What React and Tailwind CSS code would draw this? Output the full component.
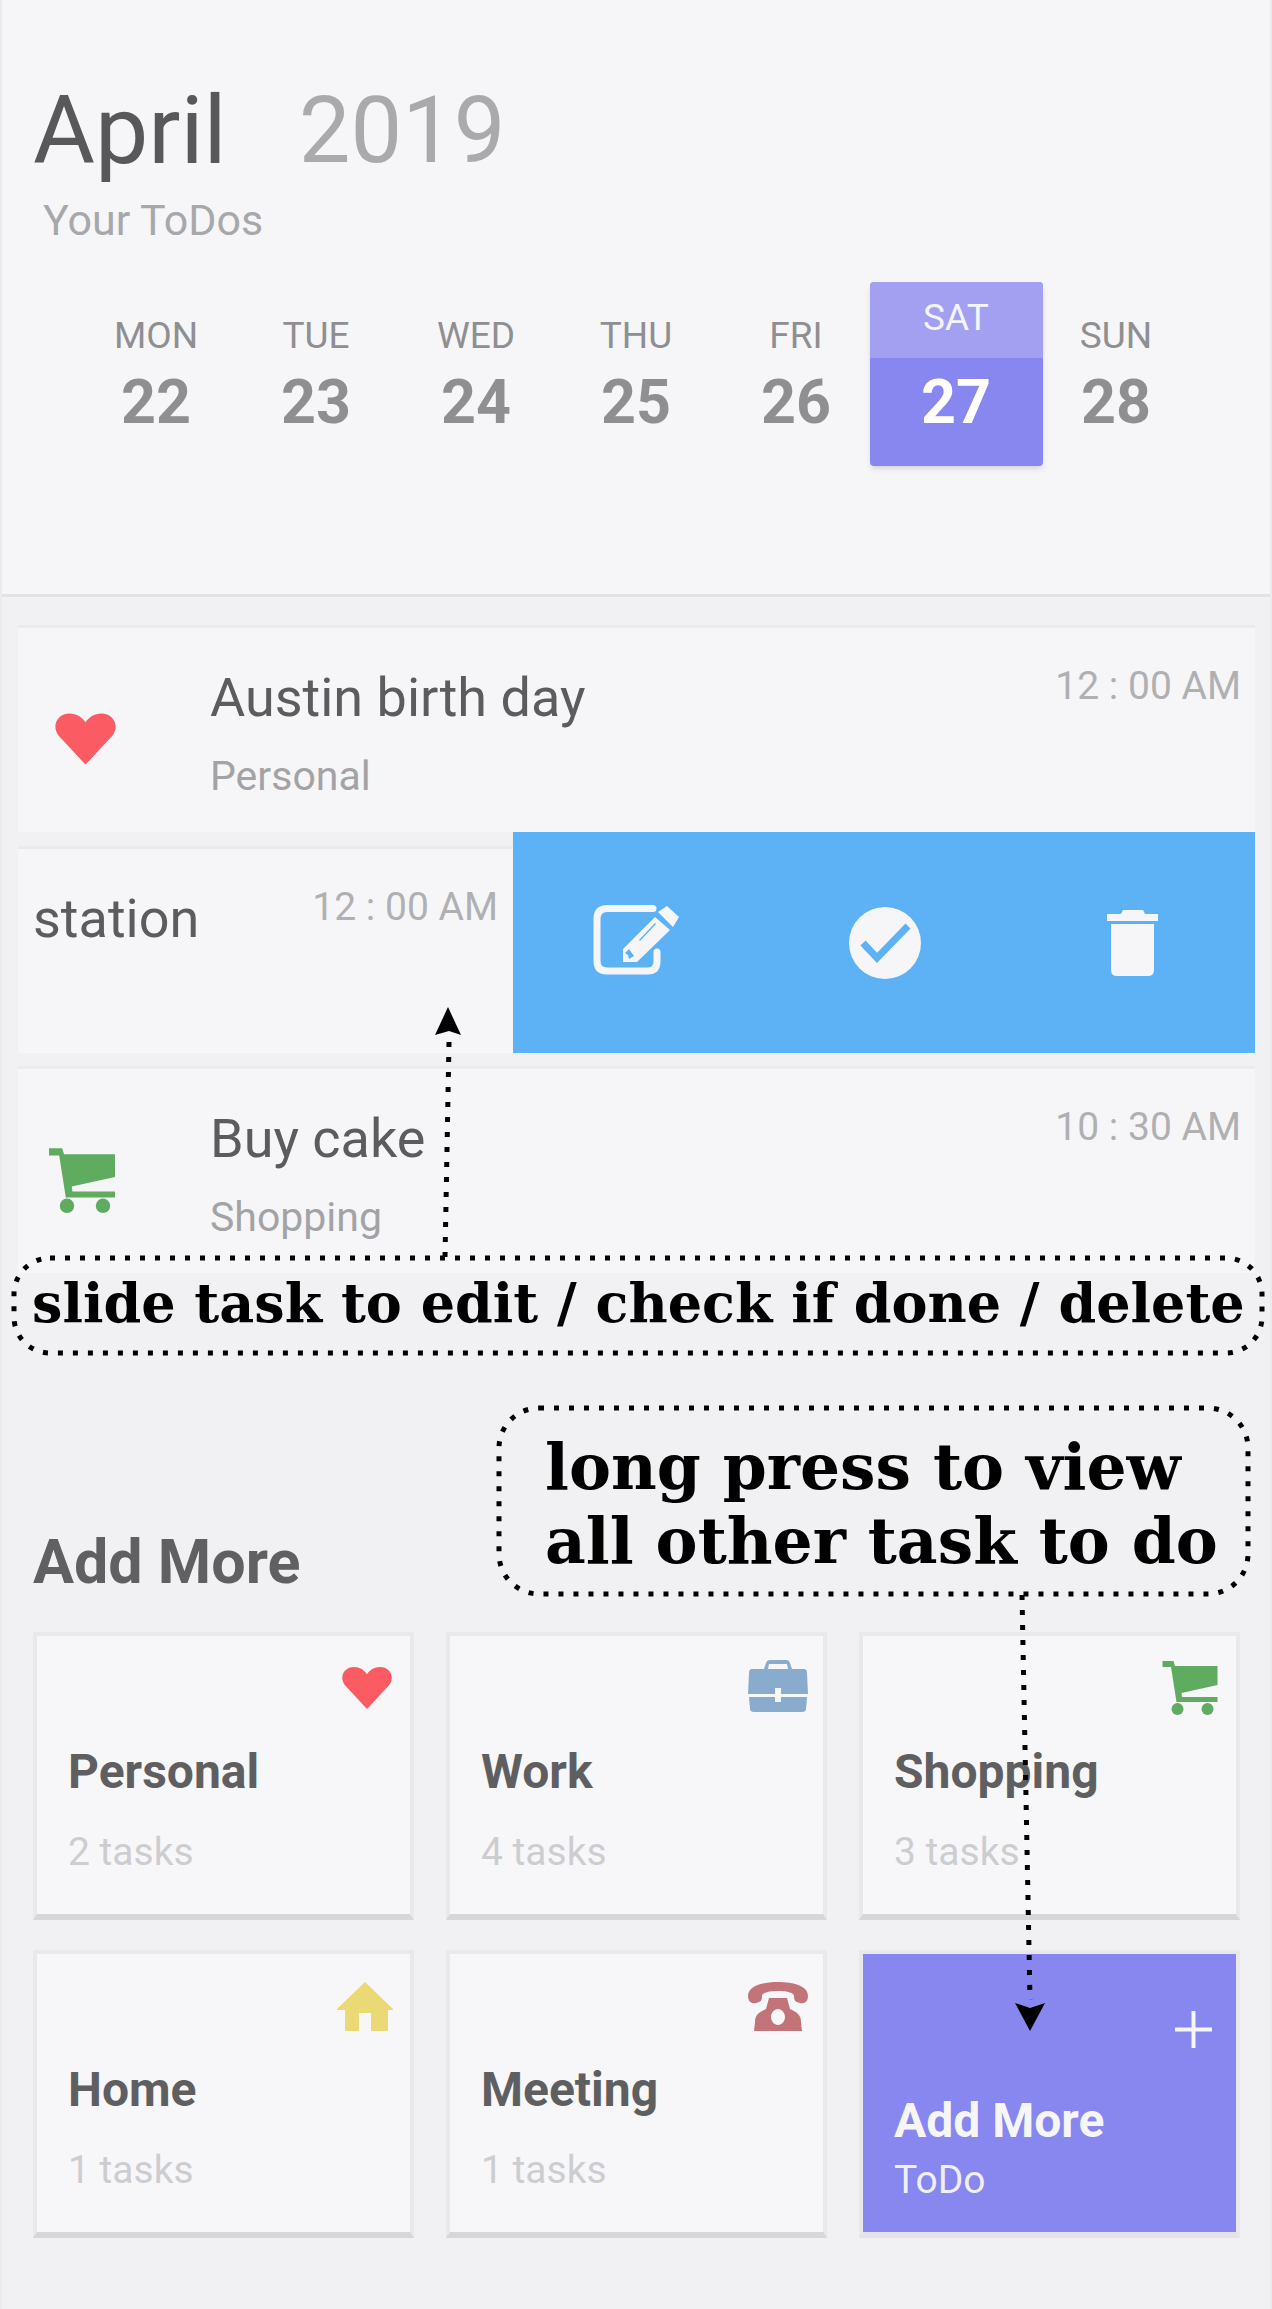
const days = [
  ["MON", 22],
  ["TUE", 23],
  ["WED", 24],
  ["THU", 25],
  ["FRI", 26],
  ["SAT", 27],
  ["SUN", 28],
];

function Heart({ className }) {
  return (
    <svg viewBox="0 0 64 52" className={className} fill="#fb5b62">
      <path d="M32 52L5 23C-3 13 3 0 16 0C23 0 29 4 32 9C35 4 41 0 48 0C61 0 67 13 59 23Z" />
    </svg>
  );
}

function Cart({ className }) {
  return (
    <svg viewBox="0 0 55 55" className={className} fill="#5fac60">
      <path d="M0 1H11L12.5 6H55V25L19 33L19.5 37H55V42H14L8.5 7H0Z" />
      <circle cx="15" cy="49" r="6" />
      <circle cx="45" cy="49" r="6" />
    </svg>
  );
}

function Briefcase({ className }) {
  return (
    <svg viewBox="0 0 60 52" className={className} fill="#88abce" fillRule="evenodd">
      <path d="M4 9H16L18 3Q19 0 22 0H38Q41 0 42 3L44 9H56Q59 9 59 13L60 34H33V28H27V34H0L1 13Q1 9 4 9ZM21 4L20 9H40L39 4Z" />
      <path d="M1 37H27V42H33V37H59L58 49Q58 52 54 52H6Q2 52 2 49Z" />
    </svg>
  );
}

function House({ className }) {
  return (
    <svg viewBox="0 0 56 49" className={className} fill="#ebd976">
      <path d="M28 0L56 27V28H51V49H34V31H22V49H8V28H0V27Z" />
    </svg>
  );
}

function Phone({ className }) {
  return (
    <svg viewBox="0 0 60 49" className={className} fill="#c27479" fillRule="evenodd">
      <path d="M0 14C0 4 14 0 30 0C46 0 60 4 60 14C60 20 56 22 52 21C47 20 46 18 46 14C46 11 40 9 30 9C20 9 14 11 14 14C14 18 13 20 8 21C4 22 0 20 0 14Z" />
      <path d="M21 16H39L42 27C48 30 53 32 53 40L54 49H6L7 40C7 32 12 30 18 27ZM30 27C26 27 23 31 23 35C23 39 26 43 30 43C34 43 37 39 37 35C37 31 34 27 30 27Z" />
    </svg>
  );
}

function EditIcon() {
  return (
    <svg viewBox="0 0 87 70" className="w-[87px] h-[70px] -mt-[6px]">
      <path d="M60 3.5H14Q4 3.5 4 14V56Q4 66 14 66H55Q64 66 64 56V47" fill="none" stroke="#f6f6f9" strokeWidth="7" strokeLinecap="round" />
      <path d="M62 12L77 25L44 57H30V44ZM62 18L46 35L47 36L63 19ZM36 44L32 48L35 50L36 54L41 51Z" fill="#f6f6f9" fillRule="evenodd" />
      <path d="M65 7L74 1L86 12L80 22Z" fill="#f6f6f9" />
    </svg>
  );
}

function CheckIcon() {
  return (
    <svg viewBox="0 0 72 72" className="w-[72px] h-[72px] ml-[2px]">
      <circle cx="36" cy="36" r="36" fill="#f6f6f9" />
      <path d="M14 36L28 51L59 19" fill="none" stroke="#5cb2f5" strokeWidth="7" />
    </svg>
  );
}

function TrashIcon() {
  return (
    <svg viewBox="0 0 51 66" className="w-[51px] h-[66px] ml-[2px]" fill="#f6f6f9">
      <path d="M14 4L16 0H36L38 4H51V11H0V4Z" />
      <path d="M4 14H47V60Q47 66 41 66H10Q4 66 4 60Z" />
    </svg>
  );
}

function TaskRow({ icon, title, category, time }) {
  return (
    <div className="h-[207px] bg-[#f6f6f9] border-t-[3px] border-[#ebebee] flex items-start">
      <div className="w-[192px] self-stretch shrink-0 flex items-center justify-center pt-[17px] pr-[58px]">{icon}</div>
      <div className="flex-1 pt-[45px]">
        <div className="text-[54px] leading-[50px] text-[#5c5c5f]">{title}</div>
        <div className="text-[41px] leading-[40px] text-[#a3a3a6] mt-[33px]">{category}</div>
      </div>
      <div className="text-[39px] leading-[38px] text-[#b0b0b3] pt-[39px] pr-[14px]">{time}</div>
    </div>
  );
}

function Card({ icon, name, count }) {
  return (
    <div className="h-[288px] bg-[#f7f7fa] border-[4px] border-[#e9e9ec] border-b-[6px] border-b-[#d7d7da] pl-[31px]">
      <div className="h-[79px] flex justify-end items-end pr-[17px]">{icon}</div>
      <div className="text-[48px] leading-[47px] font-bold text-[#5f5f62] mt-[33px]">{name}</div>
      <div className="text-[39px] leading-[39px] text-[#cdcdd0] mt-[38px]">{count}</div>
    </div>
  );
}

export default function App() {
  return (
    <div className="relative w-[1272px] h-[2309px] overflow-hidden bg-[#f1f1f4] border-x-2 border-[#ebebee] font-['Roboto',sans-serif]">
      {/* Header */}
      <div className="h-[597px] -mx-[2px] px-[2px] bg-[#f6f6f9] border-b-[3px] border-[#e3e3e6] pt-[85px]">
        <div className="flex pl-[31px]">
          <span className="text-[95px] leading-[92px] text-[#58585b]">April</span>
          <span className="text-[92px] leading-[92px] text-[#aaaaad] ml-[72px]">2019</span>
        </div>
        <div className="text-[43px] leading-[40px] text-[#a8a8ab] pl-[41px] mt-[23px]">Your ToDos</div>
        <div className="flex ml-[74px] mt-[42px]">
          {days.map(([label, num]) =>
            label === "SAT" ? (
              <div key={label} className="w-[160px] flex justify-center">
                <div className="w-[173px] h-[184px] shrink-0 rounded-[4px] overflow-hidden bg-[#8886ef] shadow-md text-center text-white">
                  <div className="h-[76px] bg-[#a3a0f1] pt-[17px] text-[37px] leading-[37px] text-[#f4f4fb]">{label}</div>
                  <div className="pt-[14px] text-[61px] leading-[60px] font-bold">{num}</div>
                </div>
              </div>
            ) : (
              <div key={label} className="w-[160px] text-center pt-[35px]">
                <div className="text-[37px] leading-[37px] text-[#8f8f92]">{label}</div>
                <div className="text-[61px] leading-[60px] font-bold text-[#8f8f92] mt-[18px]">{num}</div>
              </div>
            )
          )}
        </div>
      </div>

      {/* Tasks */}
      <div className="ml-[16px] mr-[15px] mt-[28px]">
        <TaskRow icon={<Heart className="w-[63px] h-[52px]" />} title="Austin birth day" category="Personal" time="12 : 00 AM" />
        <div className="h-[207px] mt-[14px] flex items-start">
          <div className="w-[495px] h-[207px] bg-[#f6f6f9] border-t-[3px] border-[#ebebee] flex justify-between pl-[15px] pr-[15px]">
            <div className="text-[54px] leading-[50px] text-[#5c5c5f] pt-[45px]">station</div>
            <div className="text-[39px] leading-[38px] text-[#b0b0b3] pt-[39px]">12 : 00 AM</div>
          </div>
          <div className="flex-1 h-[221px] -mt-[14px] bg-[#5cb2f5] grid grid-cols-3 items-center justify-items-center">
            <EditIcon />
            <CheckIcon />
            <TrashIcon />
          </div>
        </div>
        <div className="mt-[13px]">
          <TaskRow icon={<Cart className="w-[66px] h-[66px] mr-[6px]" />} title="Buy cake" category="Shopping" time="10 : 30 AM" />
        </div>
      </div>

      {/* Add more */}
      <div className="pl-[31px] mt-[260px]">
        <div className="text-[61px] leading-[58px] font-bold text-[#606063]">Add More</div>
        <div className="grid grid-cols-[381px_381px_381px] gap-x-[32px] gap-y-[30px] mt-[41px]">
          <Card icon={<Heart className="w-[52px] h-[42px] mb-[6px]" />} name="Personal" count="2 tasks" />
          <Card icon={<Briefcase className="w-[60px] h-[52px] mb-[3px] -mr-[2px]" />} name="Work" count="4 tasks" />
          <Card icon={<Cart className="w-[56px] h-[55px] mr-[1px]" />} name="Shopping" count="3 tasks" />
          <Card icon={<House className="w-[56px] h-[49px] mb-[2px]" />} name="Home" count="1 tasks" />
          <Card icon={<Phone className="w-[60px] h-[49px] mb-[2px] -mr-[2px]" />} name="Meeting" count="1 tasks" />
          <div className="h-[288px] border-[4px] border-[#e9e9ec] border-b-[6px] border-b-[#e4e4e8]">
            <div className="h-full bg-[#8886ef] pl-[31px] pt-[57px]">
              <div className="flex justify-end pr-[24px]">
                <svg viewBox="0 0 37 37" className="w-[37px] h-[37px]" stroke="#f6f6f9" strokeWidth="4">
                  <path d="M18.5 0V37M0 18.5H37" />
                </svg>
              </div>
              <div className="text-[48px] leading-[47px] font-bold text-[#f6f6f9] mt-[49px]">Add More</div>
              <div className="text-[39px] leading-[39px] text-[#f0f0fa] mt-[17px]">ToDo</div>
            </div>
          </div>
        </div>
      </div>

      {/* Annotations drawn on top of the screenshot */}
      <svg className="absolute -left-[2px] top-0 w-[1272px] h-[2309px] pointer-events-none" viewBox="0 0 1272 2309" fill="none" stroke="#000" strokeWidth="5" strokeDasharray="5 10">
        <rect x="14" y="1258" width="1248" height="95" rx="36" />
        <rect x="499" y="1408" width="749" height="186" rx="40" />
        <path d="M449 1042L445 1257" />
        <path d="M1022 1595L1030 2000" />
        <path d="M448 1007L461 1035L449 1031L435 1035Z" fill="#000" stroke="none" />
        <path d="M1030 2031L1045 2003L1030 2008L1015 2003Z" fill="#000" stroke="none" />
      </svg>
      <div className="absolute left-[30px] top-[1268px] whitespace-nowrap font-['DejaVu_Serif',serif] font-bold text-[54px] leading-[70px] text-black">
        slide task to edit / check if done / delete
      </div>
      <div className="absolute left-[543px] top-[1430px] whitespace-nowrap font-['DejaVu_Serif',serif] font-bold text-[63px] leading-[74px] text-black">
        long press to view
        <br />
        all other task to do
      </div>
    </div>
  );
}
